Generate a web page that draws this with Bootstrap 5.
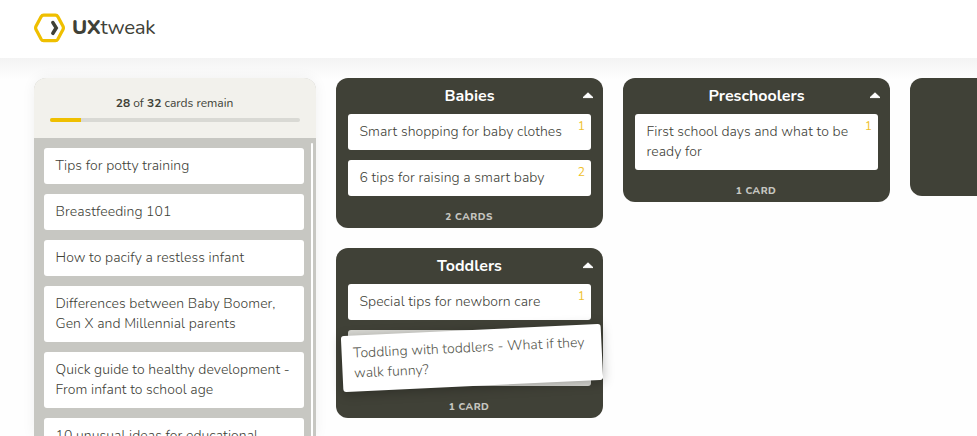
<!DOCTYPE html>
<html lang="en">
<head>
<meta charset="utf-8">
<meta name="viewport" content="width=device-width, initial-scale=1">
<title>UXtweak card sorting</title>
<link href="https://cdn.jsdelivr.net/npm/bootstrap@5.3.0/dist/css/bootstrap.min.css" rel="stylesheet">
<style>
  body { font-family: Nunito, Lato, "Open Sans", sans-serif; font-size: 14px; line-height: 20px; color: #404137; height: 436px; background: #fefefe; }
  .topbar { height: 58px; padding: 0 0 3px 34px; }
  .brand-name { font-size: 20.5px; line-height: 28px; letter-spacing: -.35px; margin-left: 7px; padding-bottom: 1px; }
  .brand-name b { font-weight: 800; }
  .board { padding: 20px 0 0 34px; gap: 20px; height: 378px; background: linear-gradient(#f3f3f3, #fefefe 22px); }
  .deck { width: 282px; border-radius: 12px 12px 0 0; background: #c7c7c2; box-shadow: 0 0 14px rgba(0,0,0,.06); }
  .deck-head { height: 60px; padding: 15px 16px 0; background: #f2f1ec; font-size: 12px; }
  .deck-head .remain { padding-right: 1px; }
  .deck-progress { height: 4px; margin-top: 5px; border-radius: 2px; background: #d9d9d4; }
  .deck-progress .progress-bar { background: #efbf00; }
  .deck-list { padding: 10px 12px 0 10px; gap: 10px; }
  .scroll-thumb { position: absolute; top: 5px; right: 3px; width: 2px; height: 400px; border-radius: 1px; background: #fff; }
  .topic { background: #fff; border-radius: 3px; padding: 8px 11.5px; font-weight: 330; letter-spacing: .06px; white-space: nowrap; }
  .lane-stack { gap: 20px; }
  .lane { width: 267px; border-radius: 12px; padding: 0 12px; background: #404137; }
  .lane-items { gap: 10px; }
  .lane-title { height: 36px; line-height: 36px; font-size: 16px; font-weight: 700; color: #fff; }
  .caret { position: absolute; right: -3px; top: 14px; width: 12px; height: 7px; display: block; }
  .lane-foot { height: 32px; padding: 11px 1px 0 0; font-size: 10px; font-weight: 800; letter-spacing: .5px; color: #c7c7c2; }
  .rank { position: absolute; right: 6px; top: 2px; font-size: 12px; font-weight: 400; color: #efbf2a; }
  .drop-slot { height: 56px; border-radius: 3px; background: #d9d9d4; }
  .lane-blank { height: 118px; }
  .dragged { position: absolute; left: 342px; top: 330px; width: 260px; height: 56px; transform: rotate(-2.7deg); box-shadow: 0 2px 12px rgba(0,0,0,.28); color: #55564d; z-index: 3; }
</style>
<script src="https://cdn.jsdelivr.net/npm/bootstrap@5.3.0/dist/js/bootstrap.bundle.min.js"></script>
</head>
<body class="overflow-hidden">
<header class="topbar bg-white d-flex align-items-center">
  <svg width="31" height="30" viewBox="0 0 31 30" fill="none" class="flex-shrink-0" aria-hidden="true">
    <path d="M9.6 2.2H21.4Q23 2.2 23.8 3.6L29 13.3Q29.8 15 29 16.6L23.8 26.2Q23 27.6 21.4 27.6H9.6Q8 27.6 7.2 26.2L2 16.6Q1.2 15 2 13.3L7.2 3.6Q8 2.2 9.6 2.2Z" stroke="#efbf00" stroke-width="3.2"/>
    <path d="M18.9 9.6L22.2 14.9L18.9 20.3" stroke="#404137" stroke-width="3.6" stroke-linecap="round"/>
  </svg>
  <span class="brand-name"><b>UX</b>tweak</span>
</header>
<main class="board d-flex align-items-start overflow-hidden">
  <section class="deck h-100 overflow-hidden flex-shrink-0">
    <div class="deck-head text-center">
      <div class="remain"><b>28</b> of <b>32</b> cards remain</div>
      <div class="progress deck-progress"><div class="progress-bar" style="width:12.5%"></div></div>
    </div>
    <div class="deck-list d-flex flex-column position-relative">
      <div class="topic">Tips for potty training</div>
      <div class="topic">Breastfeeding 101</div>
      <div class="topic">How to pacify a restless infant</div>
      <div class="topic">Differences between Baby Boomer,<br>Gen X and Millennial parents</div>
      <div class="topic">Quick guide to healthy development -<br>From infant to school age</div>
      <div class="topic">10 unusual ideas for educational</div>
      <span class="scroll-thumb"></span>
    </div>
  </section>
  <div class="lane-stack d-flex flex-column flex-shrink-0">
    <section class="lane">
      <div class="lane-title text-center position-relative">Babies<svg class="caret" viewBox="0 0 12 7"><path d="M6 .8L11 5.6H1Z" fill="#fff" stroke="#fff" stroke-linejoin="round"/></svg></div>
      <div class="lane-items d-flex flex-column">
        <div class="topic position-relative">Smart shopping for baby clothes<span class="rank">1</span></div>
        <div class="topic position-relative">6 tips for raising a smart baby<span class="rank">2</span></div>
      </div>
      <div class="lane-foot text-center text-uppercase">2 cards</div>
    </section>
    <section class="lane">
      <div class="lane-title text-center position-relative">Toddlers<svg class="caret" viewBox="0 0 12 7"><path d="M6 .8L11 5.6H1Z" fill="#fff" stroke="#fff" stroke-linejoin="round"/></svg></div>
      <div class="lane-items d-flex flex-column">
        <div class="topic position-relative">Special tips for newborn care<span class="rank">1</span></div>
        <div class="drop-slot"></div>
      </div>
      <div class="lane-foot text-center text-uppercase">1 card</div>
    </section>
  </div>
  <section class="lane flex-shrink-0">
    <div class="lane-title text-center position-relative">Preschoolers<svg class="caret" viewBox="0 0 12 7"><path d="M6 .8L11 5.6H1Z" fill="#fff" stroke="#fff" stroke-linejoin="round"/></svg></div>
    <div class="topic position-relative">First school days and what to be<br>ready for<span class="rank">1</span></div>
    <div class="lane-foot text-center text-uppercase">1 card</div>
  </section>
  <section class="lane lane-blank flex-shrink-0"></section>
</main>
<div class="topic dragged">Toddling with toddlers - What if they<br>walk funny?</div>
</body>
</html>
